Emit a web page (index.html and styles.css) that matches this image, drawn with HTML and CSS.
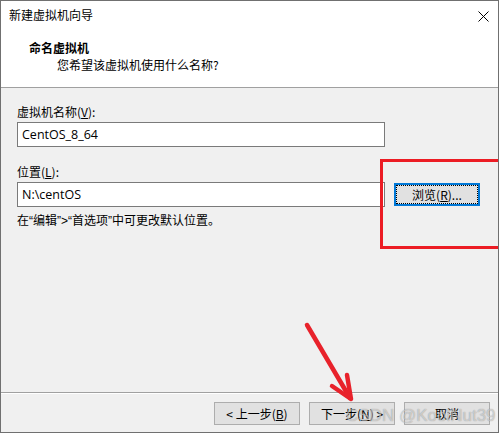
FILE: index.html
```html
<!DOCTYPE html>
<html>
<head>
<meta charset="utf-8">
<link rel="stylesheet" href="styles.css">
</head>
<body>
<div class="window">
  <div class="top">
    <div class="titlebar">
      <span class="title">新建虚拟机向导</span>
      <svg class="close" width="11" height="11" viewBox="0 0 11 11"><path d="M0.5 0.5 L10.5 10.5 M10.5 0.5 L0.5 10.5" stroke="#000" stroke-width="1" fill="none"/></svg>
    </div>
    <div class="header">
      <div class="h-title">命名虚拟机</div>
      <div class="h-sub">您希望该虚拟机使用什么名称?</div>
    </div>
  </div>
  <div class="main">
    <div class="label">虚拟机名称(<u>V</u>):</div>
    <div class="row"><div class="input">CentOS_8_64</div></div>
    <div class="label">位置(<u>L</u>):</div>
    <div class="row"><div class="input">N:\centOS</div><div class="btn focus">浏览(<u>R</u>)...</div></div>
    <div class="hint">在<span class="q">“</span>编辑<span class="q">”&gt;“</span>首选项<span class="q">”</span>中可更改默认位置。</div>
  </div>
  <div class="footer">
    <div class="btn">&lt; 上一步(<u>B</u>)</div>
    <div class="btn">下一步(<u>N</u>) &gt;</div>
    <div class="btn">取消</div>
  </div>
  <div class="redbox"></div>
  <svg class="arrow" width="60" height="90" viewBox="300 318 60 90">
    <path d="M307 325 L350 398" stroke="#e8222b" stroke-width="4.5" stroke-linecap="round" fill="none"/>
    <path d="M332 386 L351 399 L347 375" stroke="#e8222b" stroke-width="4.5" stroke-linecap="round" stroke-linejoin="round" fill="none"/>
  </svg>
  <div class="watermark">CSDN @KoolNut39</div>
</div>
</body>
</html>
```

FILE: styles.css
```css
html, body {
  margin: 0;
  padding: 0;
  background: #f0f0f0;
}
.window {
  position: relative;
  width: 499px;
  height: 433px;
  box-sizing: border-box;
  border: 1px solid #707070;
  background: #f0f0f0;
  display: flex;
  flex-direction: column;
  font-family: "Noto Sans CJK SC", sans-serif;
  font-size: 12px;
  color: #000;
  overflow: hidden;
}
.top {
  height: 87px;
  box-sizing: border-box;
  background: #fff;
  border-bottom: 1px solid #a0a0a0;
  padding-top: 6px;
}
.titlebar {
  display: flex;
  align-items: center;
  justify-content: space-between;
  height: 16px;
  line-height: 16px;
  padding-left: 8px;
  padding-right: 9px;
}
.close {
  display: block;
  margin-top: 3px;
}
.header {
  margin-top: 16px;
}
.h-title {
  font-weight: bold;
  line-height: 17px;
  padding-left: 28px;
}
.h-sub {
  line-height: 17px;
  padding-left: 56px;
}
.main {
  flex: 1;
  padding: 16px 0 0 16px;
}
.label {
  line-height: 16px;
  height: 16px;
}
.label + .row {
  margin-top: 2px;
}
.row + .label {
  margin-top: 17px;
}
.row {
  display: flex;
  align-items: center;
  gap: 9px;
}
.input {
  width: 368px;
  height: 25px;
  box-sizing: border-box;
  border: 1px solid #7a7a7a;
  background: #fff;
  line-height: 23px;
  padding-left: 4px;
  font-family: "Open Sans", "Noto Sans CJK SC", sans-serif;
  font-size: 12.5px;
}
.hint {
  margin-top: 5px;
  line-height: 16px;
}
.q {
  font-family: "Liberation Sans", sans-serif;
}
.btn {
  position: relative;
  width: 86px;
  height: 23px;
  box-sizing: border-box;
  border: 1px solid #adadad;
  background: #e1e1e1;
  display: flex;
  align-items: center;
  justify-content: center;
  line-height: 16px;
}
.btn.focus {
  border: 2px solid #0078d7;
}
.btn.focus::after {
  content: "";
  position: absolute;
  inset: 0;
  border: 1px dotted #000;
}
.footer {
  height: 40px;
  box-sizing: border-box;
  border-top: 1px solid #a0a0a0;
  box-shadow: inset 0 1px 0 #fff;
  padding: 9px 8px 0 0;
  display: flex;
  justify-content: flex-end;
  gap: 9px;
}
.redbox {
  position: absolute;
  left: 379px;
  top: 158px;
  width: 122px;
  height: 90px;
  box-sizing: border-box;
  border: 3px solid #ec1c24;
}
.arrow {
  position: absolute;
  left: 299px;
  top: 317px;
}
.watermark {
  position: absolute;
  left: 345px;
  top: 405px;
  font-family: "Liberation Sans", sans-serif;
  font-size: 17px;
  line-height: 20px;
  color: rgba(255, 255, 255, 0.5);
  text-shadow: 0 0 1px rgba(0, 0, 0, 0.4);
  white-space: nowrap;
}
```
